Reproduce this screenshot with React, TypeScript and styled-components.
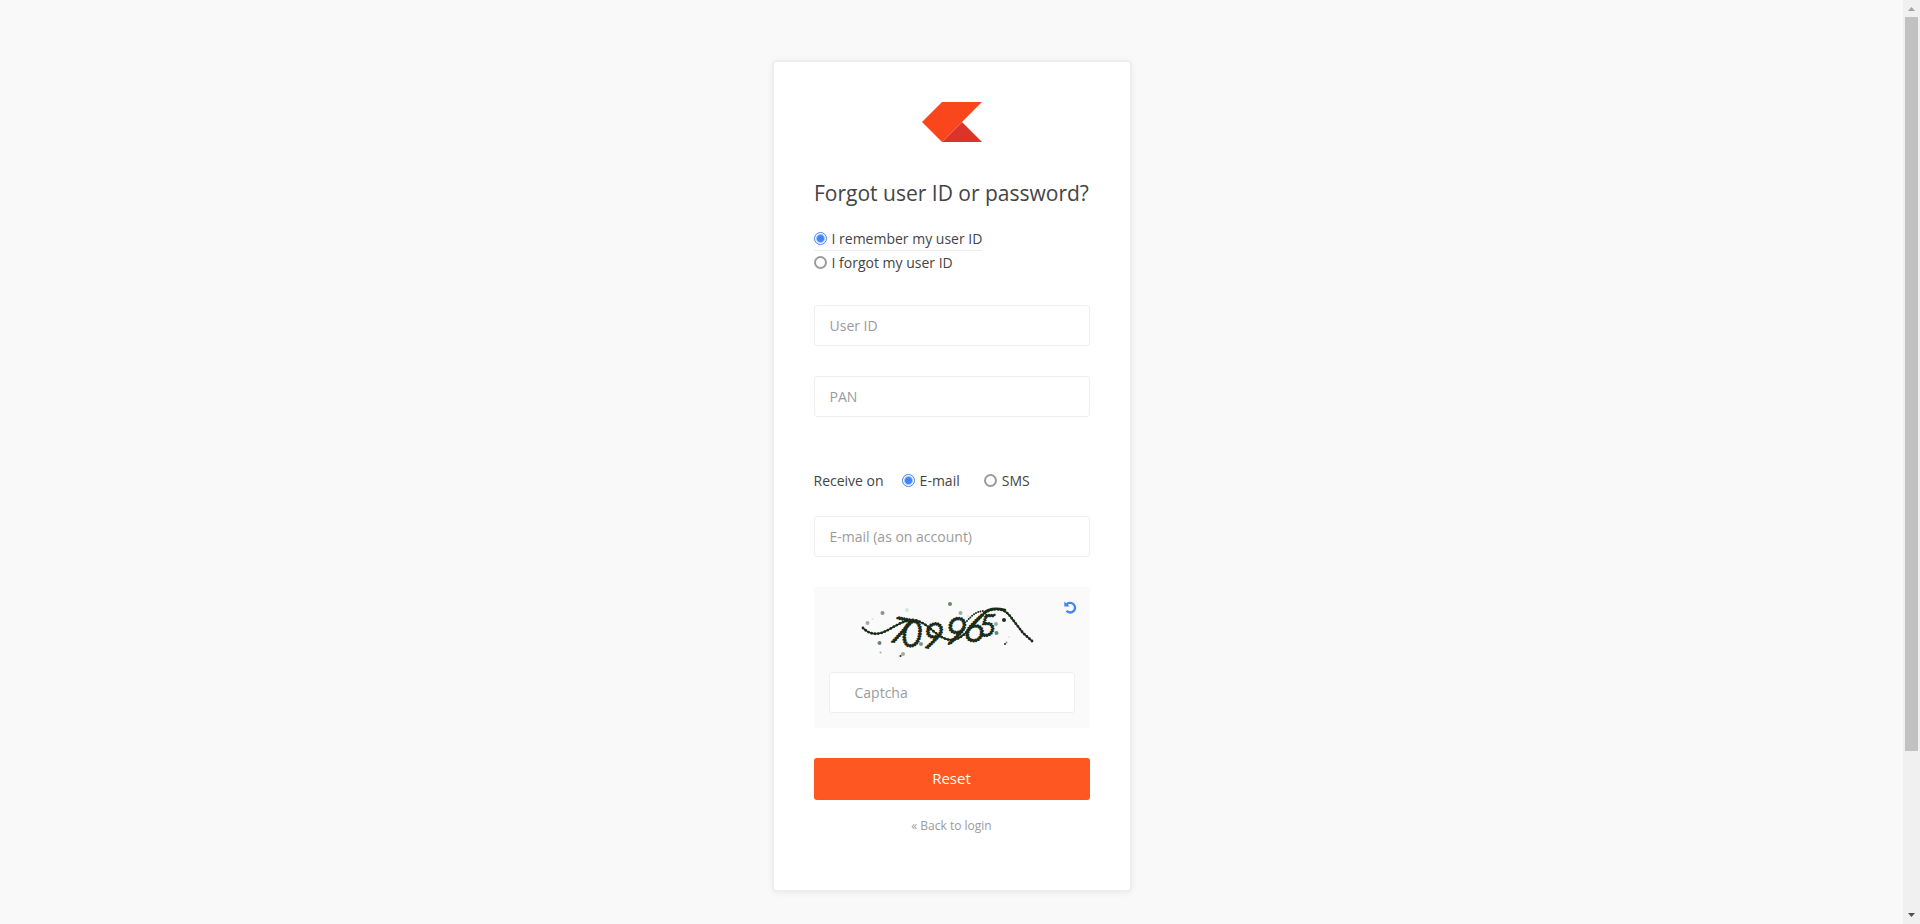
import React, { useState } from "react";
import styled, { createGlobalStyle } from "styled-components";

const GlobalStyle = createGlobalStyle`
  *, *::before, *::after { box-sizing: border-box; }
  html, body { margin: 0; background: #f9f9f9; }
  body {
    color: #444;
    font-family: "Open Sans", "Noto Sans", sans-serif;
    font-size: 14px;
    line-height: 20px;
  }
  button, input { font: inherit; }
`;

const Shell = styled.div`
  display: flex;
  height: 100vh;
  overflow: hidden;
`;

const Page = styled.main`
  flex: 1;
  min-width: 0;
  padding: 62px 20px 34px;
  overflow: hidden;
`;

const Card = styled.form`
  width: 100%;
  max-width: 356px;
  margin: 0 auto;
  padding: 40px;
  background: #fff;
  border-radius: 3px;
  box-shadow: 0 0 0 2px #eee, 0 1px 6px 2px rgba(0, 0, 0, 0.06);
`;

const Logo = styled.svg`
  display: block;
  width: 60px;
  height: 40px;
  margin: 0 auto 35px;
`;

const Title = styled.h1`
  margin: 0 0 18px;
  font-size: 21px;
  line-height: 32px;
  font-weight: 400;
  text-align: center;
  white-space: nowrap;
`;

const OptionList = styled.fieldset`
  display: flex;
  flex-direction: column;
  align-items: flex-start;
  margin: 0 0 30px;
  padding: 0;
  border: 0;
`;

const OptionRow = styled.fieldset`
  display: flex;
  align-items: center;
  margin: 52px 0 23px;
  padding: 0;
  border: 0;
`;

const RowTitle = styled.span`
  margin-right: 18px;
`;

const Option = styled.label<{ $underlined?: boolean; $spaced?: boolean }>`
  display: flex;
  align-items: center;
  gap: 5px;
  height: 24px;
  margin-right: ${(p) => (p.$spaced ? "24px" : "0")};
  border-bottom: 1px solid ${(p) => (p.$underlined ? "#eee" : "transparent")};
  cursor: pointer;
`;

const Radio = styled.input`
  appearance: none;
  width: 13px;
  height: 13px;
  margin: 0;
  border: 2px solid #9b9b9b;
  border-radius: 50%;
  background: #fff;
  &:checked {
    border: 1px solid #4184f3;
    background: radial-gradient(circle, #4184f3 0 3px, #fff 5px);
  }
`;

const Field = styled.input<{ $inset?: boolean }>`
  display: block;
  width: 100%;
  height: 41px;
  padding: 0 ${(p) => (p.$inset ? "25px" : "15px")};
  border: 1px solid #eee;
  border-radius: 3px;
  background: #fff;
  color: #444;
  outline: 0;
  &::placeholder { color: #9b9b9b; opacity: 1; }
`;

const Fields = styled.div`
  display: flex;
  flex-direction: column;
  gap: 30px;
`;

const CaptchaBox = styled.div`
  position: relative;
  margin: 30px 0;
  padding: 3px 15px 15px;
  background: #fafafa;
`;

const CaptchaImage = styled.svg`
  display: block;
  width: 200px;
  height: 80px;
  margin: 0 auto 2px;
`;

const Reload = styled.button`
  position: absolute;
  top: 14px;
  right: 13px;
  display: flex;
  padding: 0;
  border: 0;
  background: none;
  color: #4184f3;
  cursor: pointer;
`;

const Submit = styled.button`
  display: block;
  width: 100%;
  height: 42px;
  padding: 0 0 2px;
  border: 0;
  border-radius: 3px;
  background: #ff5722;
  color: #fff;
  font-size: 15px;
  cursor: pointer;
`;

const Back = styled.a`
  display: block;
  margin: 16px 0 14px;
  color: #9b9b9b;
  font-size: 12px;
  text-align: center;
  text-decoration: none;
`;

const ScrollTrack = styled.div`
  display: flex;
  flex-direction: column;
  width: 17px;
  height: 100%;
  background: #f0f0f0;
`;

const ScrollArrow = styled.svg`
  flex: none;
  width: 17px;
  height: 17px;
`;

const ScrollLane = styled.div`
  flex: 1;
  padding: 0 2px;
`;

const ScrollThumb = styled.div`
  height: 82.5%;
  background: #c1c1c1;
`;

const specks: [number, number, number, string][] = [
  [17.5, 33, 2, "#9ab09a"], [22.5, 29, 1, "#d5e8d5"], [32.5, 23, 2, "#839683"],
  [57, 20, 2, "#d5e8d5"], [100, 14, 2, "#6f846f"], [110.5, 23, 2, "#9ab09a"],
  [29.5, 53, 2, "#6f846f"], [30.5, 62.5, 1, "#9ab09a"], [53, 64, 2, "#9ab09a"],
  [50.5, 66, 1, "#1c2e1c"], [71, 54, 2, "#839683"], [154, 30, 2, "#1c2e1c"],
  [146, 34, 2, "#9ab09a"], [146.5, 43, 2, "#6f846f"], [156.5, 52.5, 1, "#839683"],
  [155, 54, 1, "#1c2e1c"], [159, 47, 1, "#d5e8d5"], [118, 26, 1, "#d5e8d5"],
];

const digits = [
  { digit: "7", x: 38, y: 51, size: 36, turn: 12 },
  { digit: "0", x: 51, y: 56, size: 36, turn: 2 },
  { digit: "9", x: 71, y: 57, size: 36, turn: 8 },
  { digit: "9", x: 93, y: 53, size: 38, turn: 8 },
  { digit: "6", x: 113, y: 50, size: 38, turn: 6 },
  { digit: "5", x: 129, y: 46, size: 30, turn: 0 },
];

const squiggle =
  "M13 38C18 43 24 45 31 43C41 40 51 30 63 30C78 31 86 49 101 50C118 50 127 23 141 20C150 18 155 20 160 26L173 43L182 51";

function CaptchaPicture() {
  return (
    <CaptchaImage viewBox="2 0 200 80" role="img" aria-label="Captcha">
      {specks.map(([x, y, r, fill], i) => (
        <circle key={i} cx={x} cy={y} r={r} fill={fill} />
      ))}
      <text
        fill="#1a2c18"
        stroke="#1a2c18"
        strokeWidth="2.3"
        strokeLinecap="round"
        strokeDasharray="0 2.6"
        fontFamily="Lato, sans-serif"
        fontStyle="italic"
        fontWeight="300"
      >
        {digits.map((d, i) => (
          <tspan key={i} x={d.x} y={d.y} fontSize={d.size} rotate={d.turn}>
            {d.digit}
          </tspan>
        ))}
      </text>
      <g fill="none" stroke="#1a2c18" strokeLinecap="round">
        <path d={squiggle} strokeWidth="1.5" />
        <path d={squiggle} strokeWidth="2.8" strokeDasharray="0 3.4" />
        <path d="M117 31C123 24 128 21 134 21" strokeWidth="2" strokeDasharray="0 2.4" />
        <path d="M134 23C139 18 147 18 155 20" strokeWidth="2.6" />
      </g>
    </CaptchaImage>
  );
}

export default function App() {
  const [remembered, setRemembered] = useState(true);
  const [channel, setChannel] = useState("email");

  return (
    <>
      <GlobalStyle />
      <Shell>
        <Page>
          <Card onSubmit={(e: React.FormEvent) => e.preventDefault()}>
            <Logo viewBox="0 0 60 40" aria-hidden="true">
              <path d="M20 0H60L20 40L0 20Z" fill="#f9461c" />
              <path d="M40 20L60 40H20Z" fill="#db342c" />
            </Logo>
            <Title>Forgot user ID or password?</Title>
            <OptionList aria-label="Account">
              <Option $underlined={remembered}>
                <Radio type="radio" name="account" checked={remembered} onChange={() => setRemembered(true)} />
                I remember my user ID
              </Option>
              <Option $underlined={!remembered}>
                <Radio type="radio" name="account" checked={!remembered} onChange={() => setRemembered(false)} />
                I forgot my user ID
              </Option>
            </OptionList>
            <Fields>
              <Field type="text" placeholder="User ID" aria-label="User ID" />
              <Field type="text" placeholder="PAN" aria-label="PAN" />
            </Fields>
            <OptionRow aria-label="Receive on">
              <RowTitle>Receive on</RowTitle>
              <Option $spaced>
                <Radio type="radio" name="channel" checked={channel === "email"} onChange={() => setChannel("email")} />
                E-mail
              </Option>
              <Option>
                <Radio type="radio" name="channel" checked={channel === "sms"} onChange={() => setChannel("sms")} />
                SMS
              </Option>
            </OptionRow>
            <Field type="email" placeholder="E-mail (as on account)" aria-label="E-mail" />
            <CaptchaBox>
              <CaptchaPicture />
              <Reload type="button" aria-label="Reload captcha">
                <svg width="13" height="13" viewBox="0 0 13 13" aria-hidden="true">
                  <path d="M2.6 3.6A4.8 4.8 0 1 1 2.6 9.8" fill="none" stroke="currentColor" strokeWidth="2.3" />
                  <path d="M0.3 0.4V5.6H5.5Z" fill="currentColor" />
                </svg>
              </Reload>
              <Field type="text" placeholder="Captcha" aria-label="Captcha" $inset />
            </CaptchaBox>
            <Submit type="submit">Reset</Submit>
            <Back href="#login">« Back to login</Back>
          </Card>
        </Page>
        <ScrollTrack aria-hidden="true">
          <ScrollArrow viewBox="0 0 17 17">
            <path d="M5 11H12L8.5 7Z" fill="#a3a3a3" />
          </ScrollArrow>
          <ScrollLane>
            <ScrollThumb />
          </ScrollLane>
          <ScrollArrow viewBox="0 0 17 17">
            <path d="M5 6H12L8.5 10Z" fill="#505050" />
          </ScrollArrow>
        </ScrollTrack>
      </Shell>
    </>
  );
}
